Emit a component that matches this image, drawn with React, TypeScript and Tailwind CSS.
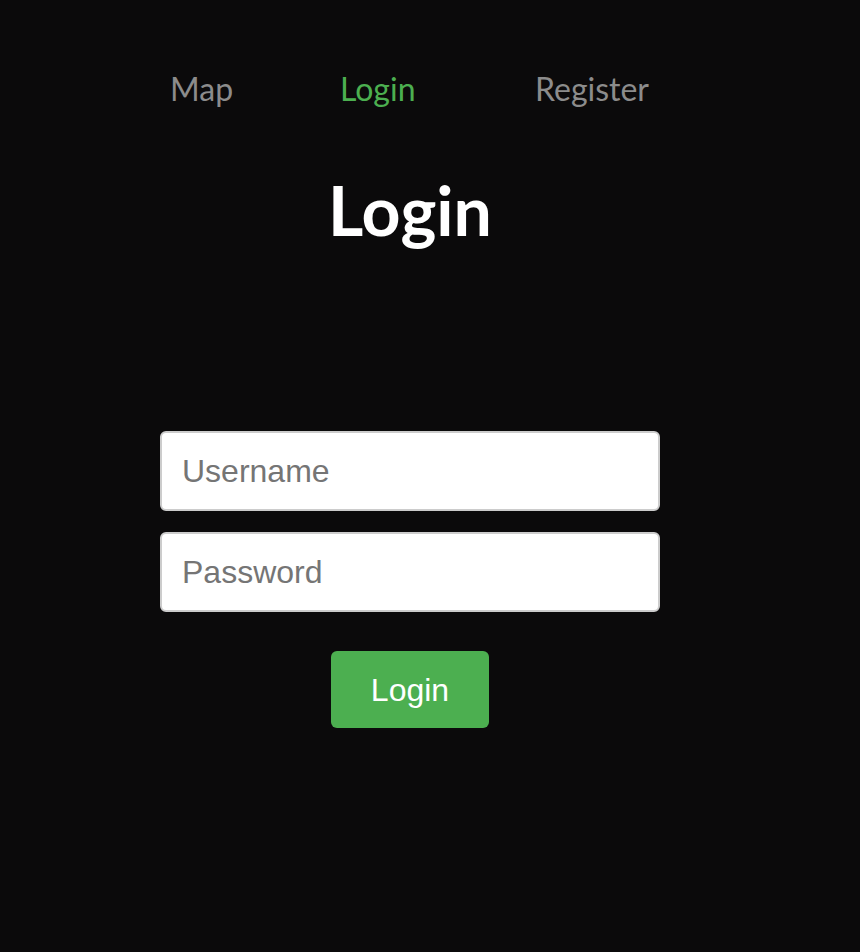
import React from 'react';

const App: React.FC = () => {
  return (
    <div className="min-h-[952px] bg-[#0b0a0b] pr-[40px]" style={{ fontFamily: 'Lato, "Noto Sans", sans-serif' }}>
      {/* Nav */}
      <nav className="flex pl-[170px] pt-[69px] text-[32px] leading-[40px]">
        <a href="#" className="w-[170px] text-[#8c8c8c]">Map</a>
        <a href="#" className="w-[195px] text-[#4caf50]">Login</a>
        <a href="#" className="text-[#8c8c8c]">Register</a>
      </nav>

      <h1 className="mt-[63px] text-center text-[68px] font-bold leading-[76px] text-white">Login</h1>

      {/* Form */}
      <form className="mt-[183px] flex flex-col items-center" style={{ fontFamily: '"Liberation Sans", Arial, sans-serif' }}>
        <input
          type="text"
          placeholder="Username"
          className="h-[80px] w-[500px] rounded-[6px] border-2 border-[#cccccc] bg-white px-[20px] text-[32px] text-black placeholder-[#757575] outline-none"
        />
        <input
          type="password"
          placeholder="Password"
          className="mt-[21px] h-[80px] w-[500px] rounded-[6px] border-2 border-[#cccccc] bg-white px-[20px] text-[32px] text-black placeholder-[#757575] outline-none"
        />
        <button type="button" className="mt-[39px] h-[77px] w-[158px] rounded-[6px] bg-[#4caf50] text-[32px] text-white">
          Login
        </button>
      </form>
    </div>
  );
};

export default App;
